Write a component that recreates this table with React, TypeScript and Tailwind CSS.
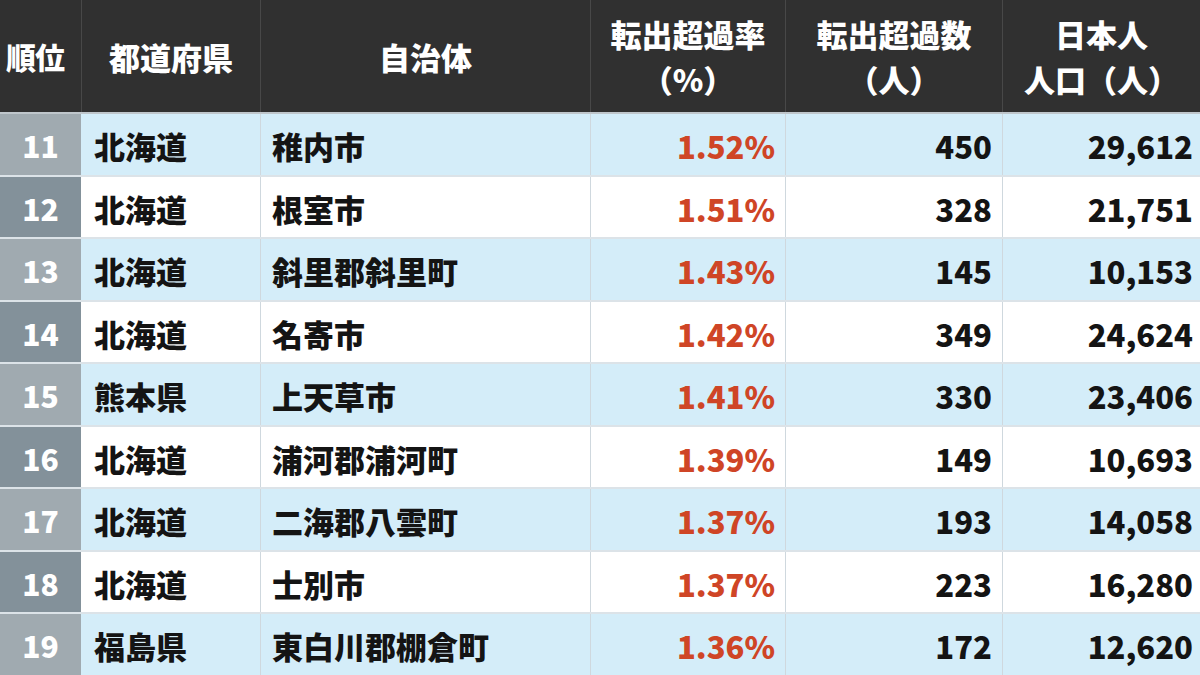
const rows = [
  { rank: 11, pref: '北海道', city: '稚内市', rate: '1.52%', count: '450', pop: '29,612' },
  { rank: 12, pref: '北海道', city: '根室市', rate: '1.51%', count: '328', pop: '21,751' },
  { rank: 13, pref: '北海道', city: '斜里郡斜里町', rate: '1.43%', count: '145', pop: '10,153' },
  { rank: 14, pref: '北海道', city: '名寄市', rate: '1.42%', count: '349', pop: '24,624' },
  { rank: 15, pref: '熊本県', city: '上天草市', rate: '1.41%', count: '330', pop: '23,406' },
  { rank: 16, pref: '北海道', city: '浦河郡浦河町', rate: '1.39%', count: '149', pop: '10,693' },
  { rank: 17, pref: '北海道', city: '二海郡八雲町', rate: '1.37%', count: '193', pop: '14,058' },
  { rank: 18, pref: '北海道', city: '士別市', rate: '1.37%', count: '223', pop: '16,280' },
  { rank: 19, pref: '福島県', city: '東白川郡棚倉町', rate: '1.36%', count: '172', pop: '12,620' },
];

const cols = 'grid grid-cols-[81px_179px_330px_195px_217px_198px]';

export default function App() {
  return (
    <div
      className="w-[1200px] h-[675px] overflow-hidden bg-white font-black text-[#141414]"
      style={{ fontFamily: '"Noto Sans CJK JP", "Noto Sans", sans-serif' }}
    >
      {/* header */}
      <div className={`${cols} h-[114px] bg-[#303030] text-white text-[31px] leading-[45px] border-b-2 border-[#bfc6cb]`}>
        <div className="flex items-center pl-[6px] text-[30px] tracking-[-1px]">順位</div>
        <div className="flex items-center justify-center border-l border-[#484848]">都道府県</div>
        <div className="flex items-center justify-center border-l border-[#484848]">自治体</div>
        <div className="flex flex-col items-center justify-center border-l border-[#484848]">
          <span>転出超過率</span>
          <span>（%）</span>
        </div>
        <div className="flex flex-col items-center justify-center border-l border-[#484848]">
          <span>転出超過数</span>
          <span>（人）</span>
        </div>
        <div className="flex flex-col items-center justify-center border-l border-[#484848]">
          <span>日本人</span>
          <span>人口（人）</span>
        </div>
      </div>

      {/* body */}
      {rows.map((r, i) => {
        const odd = i % 2 === 0;
        return (
          <div
            key={r.rank}
            className={`${cols} h-[62.5px] text-[31px] border-b-2 border-[#dce3e8] ${odd ? 'bg-[#d4edf9]' : 'bg-white'}`}
          >
            <div className={`flex items-center justify-center pt-[3px] text-white text-[30px] ${odd ? 'bg-[#a0aab0]' : 'bg-[#83919a]'}`}>
              {r.rank}
            </div>
            <div className="flex items-center pl-[13px] pt-[4px]">{r.pref}</div>
            <div className="flex items-center pl-[11px] pt-[4px] border-l border-[#cfd8de]">{r.city}</div>
            <div className="flex items-center justify-end pr-[10px] pt-[4px] border-l border-[#cfd8de] text-[#cf4526]">{r.rate}</div>
            <div className="flex items-center justify-end pr-[10px] pt-[4px] border-l border-[#cfd8de]">{r.count}</div>
            <div className="flex items-center justify-end pr-[7px] pt-[4px] border-l border-[#cfd8de]">{r.pop}</div>
          </div>
        );
      })}
    </div>
  );
}
